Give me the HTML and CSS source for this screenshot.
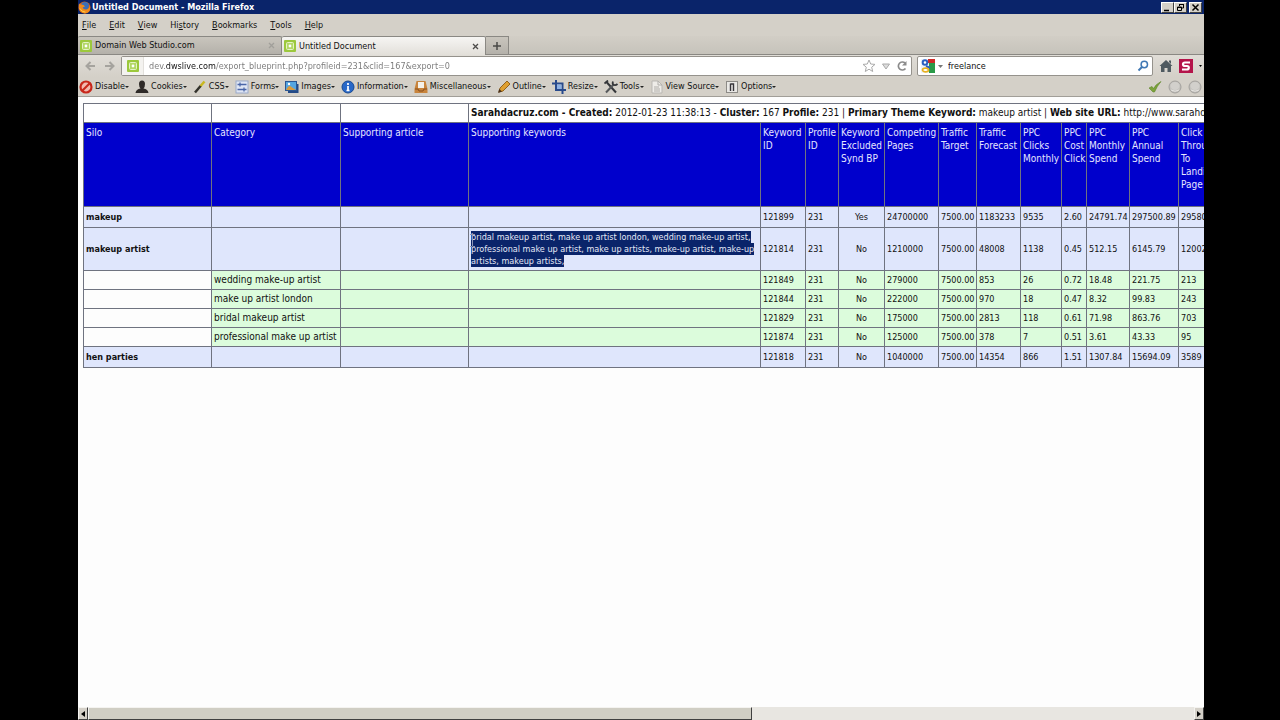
FILE: index.html
```html
<!DOCTYPE html>
<html lang="en">
<head>
<meta charset="utf-8">
<title>Untitled Document - Mozilla Firefox</title>
<link rel="stylesheet" href="styles.css">
</head>
<body>
<svg class="defs" aria-hidden="true">
  <symbol id="site" viewBox="0 0 12 12"><rect width="12" height="12" rx="1" fill="#9cc83c"/><rect x="2.5" y="2.5" width="7" height="7" rx="1" fill="#b4d868" stroke="#e4f2c4"/><circle cx="6" cy="6" r="1.4" fill="#fff"/></symbol>
  <symbol id="ball" viewBox="0 0 14 14"><circle cx="7" cy="7" r="6" fill="#c4c2be" stroke="#a3a19d"/><ellipse cx="7" cy="6" rx="4.500" ry="4" fill="#d2d0cc"/><path d="M3 10q4 2.500 8 0" stroke="#e6e4e0" fill="none"/></symbol>
</svg>
<div class="window">
  <header class="titlebar">
    <svg class="fox" viewBox="0 0 14 14"><circle cx="7" cy="7" r="6.5" fill="#d9600f"/><circle cx="7.5" cy="5.5" r="4.3" fill="#3a6fb8"/><path d="M1 3q1 1 3 .7Q7 4 7.500 6L5 7q1 3 5 2 2-1 2.500-4 2 8-5 8.500Q0 13 1 3z" fill="#f08a1c"/><path d="M2 8q2 4 6 4" stroke="#ffd34a" fill="none"/></svg>
    <h1 class="title">Untitled Document - Mozilla Firefox</h1>
    <div class="controls">
      <button class="ctl" aria-label="Minimize"><svg viewBox="0 0 11 9"><path d="M2 7.500h5" stroke="#000" stroke-width="1.500"/></svg></button>
      <button class="ctl" aria-label="Restore"><svg viewBox="0 0 11 9"><path d="M4.500 3V1.500h4v3.500H7M4 1.500h5" stroke="#000" fill="none"/><path d="M2.500 4h4v3.500h-4zM2 4.500h5" stroke="#000" fill="none"/></svg></button>
      <button class="ctl ctl-close" aria-label="Close"><svg viewBox="0 0 11 9"><path d="M2.500 1.500l6 6M8.500 1.500l-6 6" stroke="#000" stroke-width="1.500"/></svg></button>
    </div>
  </header>
  <nav class="menubar">
    <button><u>F</u>ile</button><button><u>E</u>dit</button><button><u>V</u>iew</button><button>Hi<u>s</u>tory</button><button><u>B</u>ookmarks</button><button><u>T</u>ools</button><button><u>H</u>elp</button>
  </nav>
  <div class="tabs">
    <div class="tab"><svg class="site"><use href="#site"/></svg><span class="tab-label">Domain Web Studio.com</span><button class="tab-x" aria-label="Close tab"><svg viewBox="0 0 7 7"><path d="M1 1l5 5M6 1L1 6" stroke="#a19f9a" stroke-width="1.300"/></svg></button></div>
    <div class="tab active"><svg class="site"><use href="#site"/></svg><span class="tab-label">Untitled Document</span><button class="tab-x" aria-label="Close tab"><svg viewBox="0 0 7 7"><path d="M1 1l5 5M6 1L1 6" stroke="#4c4b49" stroke-width="1.300"/></svg></button></div>
    <button class="newtab" aria-label="New tab"><svg viewBox="0 0 10 10"><path d="M5 1v8M1 5h8" stroke="#4a4947" stroke-width="1.500"/></svg></button>
  </div>
  <div class="navbar">
    <button class="arrow" aria-label="Back"><svg viewBox="0 0 12 12"><path d="M11 6H3M6.500 2L2.500 6l4 4" stroke="#a5a39e" stroke-width="2" fill="none"/></svg></button>
    <button class="arrow" aria-label="Forward"><svg viewBox="0 0 12 12"><path d="M1 6h8M5.500 2l4 4-4 4" stroke="#a5a39e" stroke-width="2" fill="none"/></svg></button>
    <div class="field url">
      <span class="identity"><svg class="site"><use href="#site"/></svg></span>
      <input class="url-text" aria-label="Address" value="dev.dwslive.com/export_blueprint.php?profileid=231&amp;clid=167&amp;export=0">
      <button aria-label="Bookmark this page"><svg class="i14" viewBox="0 0 14 14"><path d="M7 1l1.700 4 4.300.4-3.300 2.800 1 4.300L7 10.200l-3.700 2.300 1-4.300L1 5.400 5.300 5z" fill="#fff" stroke="#aaa"/></svg></button>
      <button aria-label="History"><svg class="i10" viewBox="0 0 10 10"><path d="M1.500 3h7L5 8z" fill="#ddd" stroke="#aaa"/></svg></button>
      <button aria-label="Reload"><svg class="i12" viewBox="0 0 12 12"><path d="M9.500 8.500A4 4 0 1 1 9 3" stroke="#8b8b8b" stroke-width="1.700" fill="none"/><path d="M10.500 1v4.500H6z" fill="#8b8b8b"/></svg></button>
    </div>
    <div class="field search">
      <svg class="i14" viewBox="0 0 14 14"><rect width="14" height="14" fill="#eef3fb"/><path d="M7 0h7v4H7z" fill="#cf2a27"/><path d="M8 4h6v10H8z" fill="#2a9a48"/><circle cx="4" cy="3.500" r="2.300" fill="#fff" stroke="#2a5fc0" stroke-width="2"/><path d="M5 7l4 2" stroke="#2a5fc0" stroke-width="2"/><ellipse cx="4.500" cy="11" rx="3" ry="1.800" fill="#fff" stroke="#e8b120" stroke-width="1.700"/></svg>
      <svg class="caret" viewBox="0 0 5 3"><path d="M0 0h5L2.500 3z" fill="#777"/></svg>
      <input class="search-text" aria-label="Search" value="freelance">
      <button aria-label="Search"><svg class="i12" viewBox="0 0 12 12"><circle cx="7.300" cy="4.500" r="3.200" fill="#fff" stroke="#4078b4" stroke-width="1.500"/><path d="M5 7L1.500 10.500" stroke="#4078b4" stroke-width="2"/></svg></button>
    </div>
    <button class="home" aria-label="Home"><svg class="i14" viewBox="0 0 14 14"><path d="M7 1l6.500 6H12v6H8.500V9h-3v4H2V7H.5zM10 1.500h2V5l-2-2z" fill="#4f5a60"/></svg></button>
    <button class="addon" aria-label="Add-on"><svg class="i14" viewBox="0 0 14 14"><rect width="14" height="14" fill="#b4144a"/><path d="M11 3.500H6Q3.800 3.500 4 5.300T6.300 7H8q2 0 1.800 1.800T7.600 10.500H3" stroke="#fff" stroke-width="2.200" fill="none"/></svg><svg class="caret small" viewBox="0 0 5 3"><path d="M0 0h5L2.500 3z"/></svg></button>
  </div>
  <div class="devbar">
    <button><svg class="i14" viewBox="0 0 14 14"><circle cx="7" cy="7" r="5.500" fill="#f3b9b0" stroke="#c8281c" stroke-width="2.200"/><path d="M3.500 10.500l7-7" stroke="#c8281c" stroke-width="2.200"/></svg>Disable<i></i></button>
    <button><svg class="i14" viewBox="0 0 14 14"><path d="M4 4a3 3.500 0 0 1 6 0q0 3-1.500 4.500Q13 9 13.500 13H.5Q1 9 5.500 8.500 4 7 4 4z" fill="#2e2a28"/></svg>Cookies<i></i></button>
    <button><svg class="i14" viewBox="0 0 14 14"><path d="M2 12.500l6-7" stroke="#33322c" stroke-width="2.500"/><path d="M7.500 6l4-4.500" stroke="#c9b820" stroke-width="2.500"/></svg>CSS<i></i></button>
    <button><svg class="i14" viewBox="0 0 14 14"><rect x="1" y="1" width="12" height="12" fill="#dfe6f4" stroke="#9aa9c8"/><path d="M2.500 4.500h9M2.500 9.500h9M5 2.500v4M9 7.500v4" stroke="#4a66a8" stroke-width="1.300"/></svg>Forms<i></i></button>
    <button><svg class="i14" viewBox="0 0 14 14"><rect x="3" y="4" width="10.500" height="9" fill="#244a86"/><rect x=".5" y="1.500" width="11" height="9" fill="#54a5e0" stroke="#2b5793"/><path d="M1 10q3-6 5.500-3L11 10z" fill="#d89a3c"/><circle cx="4" cy="4" r="1.200" fill="#fff"/></svg>Images<i></i></button>
    <button><svg class="i14" viewBox="0 0 14 14"><circle cx="7" cy="7" r="6" fill="#2868c8" stroke="#174890"/><path d="M7 3v2M7 6v5M5.500 10.500h3" stroke="#fff" stroke-width="1.700"/></svg>Information<i></i></button>
    <button><svg class="i14" viewBox="0 0 14 14"><path d="M2.500 1h9l2 8v4H.5V9z" fill="#c8843c"/><path d="M4 2h6v6H4z" fill="#f4f1ea"/><path d="M1 9h3l1 2h4l1-2h3" stroke="#8a4f1c" fill="none"/></svg>Miscellaneous<i></i></button>
    <button><svg class="i14" viewBox="0 0 14 14"><path d="M2 12l1-4 7-7 3 3-7 7z" fill="#e0a030" stroke="#94631c"/><path d="M1 13l1.200-4L5 11.500z" fill="#4a321c"/></svg>Outline<i></i></button>
    <button><svg class="i14" viewBox="0 0 14 14"><path d="M4 0v10h10M0 3.500h10.500V14" stroke="#284a8c" stroke-width="2" fill="none"/><path d="M5 4.500h4.500V9H5z" fill="#8db1e4"/></svg>Resize<i></i></button>
    <button><svg class="i14" viewBox="0 0 14 14"><path d="M2 1.500l10 11" stroke="#35373a" stroke-width="2"/><path d="M2 12.500L10 4" stroke="#55585b" stroke-width="2"/><path d="M9 1.500q-1 3 1 3.500t3.500-1M.5 3.500l3.500-3" stroke="#35373a" stroke-width="1.800" fill="none"/></svg>Tools<i></i></button>
    <button><svg class="i14" viewBox="0 0 14 14"><path d="M2 1h6l4 4v8H2z" fill="#eeece8" stroke="#b9b7b3"/><path d="M8 1v4h4M4 7h5M4 9h6M4 11h6" stroke="#b0aeaa" fill="none"/></svg>View Source<i></i></button>
    <button><svg class="i14" viewBox="0 0 14 14"><rect x="1.500" y="1.500" width="11" height="11" fill="#e9e8e5" stroke="#8c8a86"/><path d="M5.500 3.500V11M5.500 4h3v7" stroke="#37353a" stroke-width="1.400" fill="none"/></svg>Options<i></i></button>
    <div class="status">
      <svg class="i14" viewBox="0 0 14 14"><path d="M1 8l3-1.500 1.500 2Q8 4 13 1.500 9 6 6.500 12H5z" fill="#7ca33c" stroke="#5d8428" stroke-width=".6"/></svg>
      <svg class="i14"><use href="#ball"/></svg>
      <svg class="i14"><use href="#ball"/></svg>
    </div>
  </div>
  <main class="page">
    <table class="report">
      <colgroup><col class="c-silo"><col class="c-category"><col class="c-silo"><col class="c-keywords"><col class="c-kid"><col class="c-pid"><col class="c-excl"><col class="c-comp"><col class="c-target"><col class="c-fore"><col class="c-clicks"><col class="c-cost"><col class="c-month"><col class="c-year"><col class="c-land"></colgroup>
      <thead>
        <tr class="summary"><td></td><td></td><td></td><td colspan="12"><b>Sarahdacruz.com - Created:</b> 2012-01-23 11:38:13 - <b>Cluster:</b> 167 <b>Profile:</b> 231 | <b>Primary Theme Keyword:</b> makeup artist | <b>Web site URL:</b> http://www.sarahdacruz.com</td></tr>
        <tr class="head"><th>Silo</th><th>Category</th><th>Supporting article</th><th>Supporting keywords</th><th>Keyword ID</th><th>Profile ID</th><th>Keyword Excluded Synd BP</th><th>Competing Pages</th><th>Traffic Target</th><th>Traffic Forecast</th><th>PPC Clicks Monthly</th><th>PPC Cost Click</th><th>PPC Monthly Spend</th><th>PPC Annual Spend</th><th>Click<br>Through<br>To<br>Landing<br>Page</th></tr>
      </thead>
      <tbody>
        <tr class="silo"><th>makeup</th><td></td><td></td><td></td><td>121899</td><td>231</td><td class="mid">Yes</td><td>24700000</td><td>7500.00</td><td>1183233</td><td>9535</td><td>2.60</td><td>24791.74</td><td>297500.89</td><td>29580</td></tr>
        <tr class="silo tall"><th>makeup artist</th><td></td><td></td><td class="keywords"><mark>bridal makeup artist, make up artist london, wedding make-up artist,<br>professional make up artist, make up artists, make-up artist, make-up<br>artists, makeup artists,</mark><svg class="ibeam" viewBox="0 0 7 13"><path d="M1 .5h2l.5.500.5-.5h2M3.500 1v11M1 12.500h2l.5-.5.5.500h2" stroke="#8f98b8" fill="none"/></svg></td><td>121814</td><td>231</td><td class="mid">No</td><td>1210000</td><td>7500.00</td><td>48008</td><td>1138</td><td>0.45</td><td>512.15</td><td>6145.79</td><td>12002</td></tr>
        <tr class="cat"><td></td><td>wedding make-up artist</td><td></td><td></td><td>121849</td><td>231</td><td class="mid">No</td><td>279000</td><td>7500.00</td><td>853</td><td>26</td><td>0.72</td><td>18.48</td><td>221.75</td><td>213</td></tr>
        <tr class="cat"><td></td><td>make up artist london</td><td></td><td></td><td>121844</td><td>231</td><td class="mid">No</td><td>222000</td><td>7500.00</td><td>970</td><td>18</td><td>0.47</td><td>8.32</td><td>99.83</td><td>243</td></tr>
        <tr class="cat"><td></td><td>bridal makeup artist</td><td></td><td></td><td>121829</td><td>231</td><td class="mid">No</td><td>175000</td><td>7500.00</td><td>2813</td><td>118</td><td>0.61</td><td>71.98</td><td>863.76</td><td>703</td></tr>
        <tr class="cat"><td></td><td>professional make up artist</td><td></td><td></td><td>121874</td><td>231</td><td class="mid">No</td><td>125000</td><td>7500.00</td><td>378</td><td>7</td><td>0.51</td><td>3.61</td><td>43.33</td><td>95</td></tr>
        <tr class="silo"><th>hen parties</th><td></td><td></td><td></td><td>121818</td><td>231</td><td class="mid">No</td><td>1040000</td><td>7500.00</td><td>14354</td><td>866</td><td>1.51</td><td>1307.84</td><td>15694.09</td><td>3589</td></tr>
      </tbody>
    </table>
  </main>
  <div class="scrollbar">
    <button aria-label="Scroll left"><svg viewBox="0 0 4 6"><path d="M4 0v6L0 3z"/></svg></button>
    <div class="track"><div class="thumb"></div></div>
    <button aria-label="Scroll right"><svg viewBox="0 0 4 6"><path d="M0 0v6l4-3z"/></svg></button>
  </div>
</div>
</body>
</html>
```
FILE: styles.css
```css
* { box-sizing: border-box; }
body { margin: 0; background: #000; font: 10px/13px "DejaVu Sans Condensed", "DejaVu Sans", sans-serif; color: #111; }
button { display: flex; align-items: center; border: 0; padding: 0; margin: 0; background: none; font: inherit; color: inherit; white-space: nowrap; }
input { border: 0; padding: 0; outline: 0; background: none; font: inherit; min-width: 0; }
.defs { display: none; }
.window { display: flex; flex-direction: column; height: 100vh; margin: 0 76px 0 78px; background: #d4d0c8; overflow: hidden; }
.i14 { width: 14px; height: 14px; flex: none; }
.i12 { width: 12px; height: 12px; flex: none; }
.i10 { width: 10px; height: 10px; flex: none; }
.site { width: 12px; height: 12px; flex: none; }
.caret { width: 5px; height: 3px; flex: none; }
.caret.small { width: 3px; height: 2px; }

.titlebar { display: flex; align-items: center; height: 14px; padding-right: 2px; background: #0a246a; color: #fff; }
.fox { width: 13px; height: 13px; }
.title { flex: 1; margin: 0 0 0 1px; font-size: 9px; line-height: 14px; }
.controls { display: flex; }
.ctl { width: 13px; height: 11px; padding: 0; background: #d4d0c8; border: 1px solid; border-color: #fff #404040 #404040 #fff; }
.ctl svg { width: 11px; height: 9px; }
.ctl-close { margin-left: 2px; }

.menubar { display: flex; gap: 13px; height: 22px; padding: 0 4px; font-size: 9px; }
.menubar u { text-underline-offset: 1px; }

.tabs { display: flex; height: 19px; border-bottom: 1px solid #8a8883; font-size: 9px; background: linear-gradient(#d2cec6, #c6c3bb); }
.tab { display: flex; align-items: center; gap: 3px; flex: 0 1 204px; padding: 0 6px 0 2px; background: linear-gradient(#c9c5bd, #b4b1aa); border: solid #8a8883; border-width: 1px 1px 0 0; border-radius: 2px 2px 0 0; }
.tab.active { margin-bottom: -1px; background: linear-gradient(#f6f5f3, #e2dfd9); }
.tab-label { flex: 1; }
.tab-x svg { width: 7px; height: 7px; }
.newtab { width: 23px; justify-content: center; background: linear-gradient(#c9c5bd, #b4b1aa); border: solid #8a8883; border-width: 1px 1px 0 0; }
.newtab svg { width: 10px; height: 10px; }

.navbar { display: flex; align-items: center; height: 22px; padding: 0 2px; background: linear-gradient(#e0ddd7, #d4d0c8); }
.arrow { width: 20px; justify-content: center; }
.arrow svg { width: 12px; height: 12px; }
.field { display: flex; align-items: center; height: 20px; background: #fff; border: 1px solid #95928c; border-radius: 2px; }
.url { flex: 1; gap: 5px; margin-left: 1px; padding-right: 3px; font-size: 9px; }
.identity { display: flex; align-items: center; justify-content: center; width: 22px; height: 18px; background: #f4f3f0; border-right: 1px solid #e2e0dc; }
.url-text { flex: 1; color: transparent; background: linear-gradient(to right, #777 17px, #111 17px, #111 67px, #777 67px); -webkit-background-clip: text; background-clip: text; }
.search { flex: 0 1 236px; gap: 3px; margin-left: 5px; padding: 0 3px; font-size: 9px; }
.search-text { flex: 1; margin-left: 2px; color: #111; }
.home { margin-left: 6px; }
.addon { margin-left: 6px; gap: 6px; }

.devbar { display: flex; align-items: center; gap: 6px; height: 20px; padding: 0 2px 0 1px; font-size: 9px; border-bottom: 1px solid #a19e98; background: #d4d0c8; }
.devbar button { gap: 2px; }
.devbar i { width: 4px; height: 2px; margin-left: -2px; border: solid transparent; border-width: 2px 2px 0; border-top-color: #222; }
.status { display: flex; gap: 6px; margin-left: auto; }

.page { flex: 1; padding: 6px 0 0 5px; background: #fdfdfd; overflow: hidden; }
.report { table-layout: fixed; width: 1155px; border-collapse: collapse; font-size: 9px; line-height: 12px; }
.report td, .report th { padding: 2px; border: 1px solid #6f7380; text-align: left; }
.c-silo { width: 128px; }
.c-category { width: 129px; }
.c-keywords { width: 292px; }
.c-kid { width: 45px; }
.c-pid { width: 33px; }
.c-excl { width: 46px; }
.c-comp { width: 54px; }
.c-target { width: 38px; }
.c-fore { width: 44px; }
.c-clicks { width: 41px; }
.c-cost { width: 25px; }
.c-month { width: 43px; }
.c-year { width: 49px; }
.c-land { width: 60px; }
.report .summary td { height: 19px; font-size: 10px; white-space: nowrap; background: #fff; }
.report .head th { height: 84px; padding-top: 3px; font-size: 10px; line-height: 13px; font-weight: normal; vertical-align: top; color: #e6e6ff; background: #0000cc; white-space: normal; }
.silo { height: 21px; background: #dfe6fc; }
.silo.tall { height: 43px; }
.cat { height: 19px; background: #dcfcdc; }
.report .cat td:first-child { background: #fdfdfd; }
.report .cat td:nth-child(2) { font-size: 10px; }
.report .mid { text-align: center; }
.report .keywords { position: relative; white-space: nowrap; }
.keywords mark { padding: 1px 0; background: #0a246a; color: #e4e8f6; }
.ibeam { position: absolute; left: 0; top: 6px; width: 7px; height: 13px; }

.scrollbar { display: flex; height: 13px; background: #e8e6e1; }
.scrollbar button { width: 10px; justify-content: center; background: #d4d0c8; border: 1px solid; border-color: #f4f3f0 #404040 #404040 #f4f3f0; }
.scrollbar svg { width: 4px; height: 6px; }
.track { flex: 1; display: flex; }
.thumb { width: 60%; background: #d0cec4; border: 1px solid; border-color: #f4f3f0 #404040 #404040 #f4f3f0; }
```
